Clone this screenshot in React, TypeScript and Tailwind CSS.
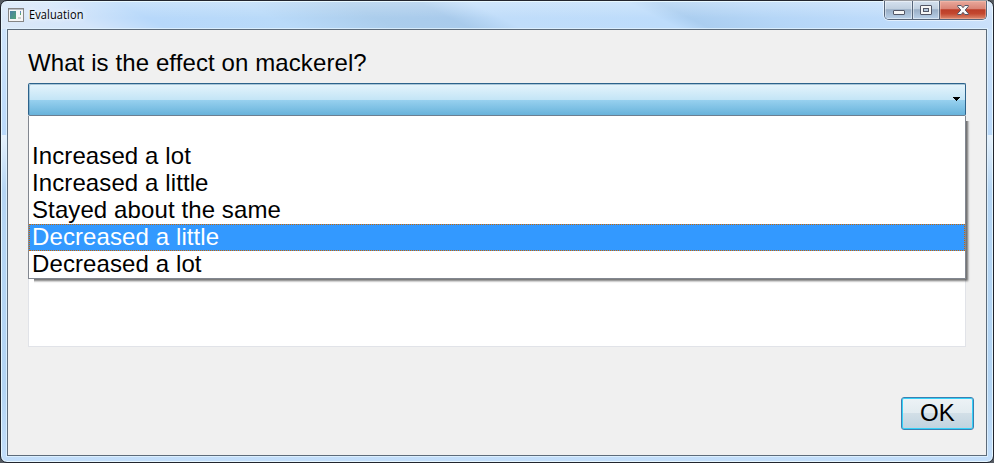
const options = [
  '',
  'Increased a lot',
  'Increased a little',
  'Stayed about the same',
  'Decreased a little',
  'Decreased a lot',
];

function AppIcon() {
  return (
    <svg width="16" height="14" viewBox="0 0 16 14" shapeRendering="crispEdges">
      <defs>
        <linearGradient id="picture" x1="0" y1="0" x2="1" y2="1">
          <stop offset="0" stopColor="#4b7fa6" />
          <stop offset="1" stopColor="#52a375" />
        </linearGradient>
      </defs>
      <rect width="16" height="14" fill="#858585" />
      <rect x="1" y="1" width="14" height="12" fill="#f6f6f6" />
      <rect x="1" y="1" width="14" height="1" fill="#b9bec4" />
      <rect x="2" y="3" width="6" height="8" fill="url(#picture)" />
      <rect x="12" y="3" width="1" height="4" fill="#6289bd" />
      <rect x="12" y="5" width="1" height="2" fill="#5aa573" />
      <rect x="10" y="9" width="3" height="2" fill="#cfcfcf" />
    </svg>
  );
}

function WindowButtons() {
  return (
    <div className="flex h-[19px] w-[103px] overflow-hidden rounded-b-[5px] border border-t-0 border-[#56657a] shadow-[0_0_0_1px_rgba(255,255,255,0.55)]">
      <button className="flex w-[28px] items-end justify-center border-r border-[#56657a] bg-[linear-gradient(#d5e1ef_0,#c0cfdf_45%,#99adc5_48%,#b9d0e9_100%)] pb-[3px] shadow-[inset_0_0_0_1px_rgba(255,255,255,0.45)]">
        <svg width="12" height="6" viewBox="0 0 12 6">
          <rect x="0.5" y="0.5" width="11" height="4" rx="0.5" fill="#f6f6f6" stroke="#535666" />
        </svg>
      </button>
      <button className="flex w-[27px] items-center justify-center border-r border-[#56657a] bg-[linear-gradient(#d5e1ef_0,#c0cfdf_45%,#99adc5_48%,#b9d0e9_100%)] shadow-[inset_0_0_0_1px_rgba(255,255,255,0.45)]">
        <svg width="12" height="10" viewBox="0 0 12 10">
          <rect x="0.5" y="0.5" width="11" height="9" rx="0.5" fill="#f6f6f6" stroke="#535666" />
          <rect x="3.5" y="3.5" width="5" height="3" fill="#b4c7dc" stroke="#535666" />
        </svg>
      </button>
      <button className="flex flex-1 items-center justify-center bg-[linear-gradient(#e9a99c_0,#d98274_45%,#bb3d28_48%,#c3472f_70%,#dc8b70_100%)] shadow-[inset_0_0_0_1px_rgba(255,200,185,0.4)]">
        <svg width="12" height="10" viewBox="0 0 12 10">
          <path d="M.7.5h3.5L6 2.7 7.8.5h3.5v1L8.2 5l3.1 3.5v1H7.8L6 7.3 4.2 9.5H.7v-1L3.8 5 .7 1.5z" fill="#f8f8f8" stroke="#535666" />
        </svg>
      </button>
    </div>
  );
}

function ComboBox() {
  return (
    <div className="relative h-[33px]">
      <div className="flex h-full items-center justify-end rounded-[2px] border border-[#2c628b] border-b-[#6c7f91] bg-[linear-gradient(#e5f4fc_0,#c4e5f6_50%,#98d1ef_51%,#68b3db_100%)] pr-[5px] pb-[2px] shadow-[inset_1px_1px_0_rgba(95,145,175,0.45)]">
        <svg width="7" height="4" viewBox="0 0 7 4" shapeRendering="crispEdges">
          <path d="M0 0h7v1H6v1H5v1H4v1H3V3H2V2H1V1H0z" fill="#000" />
        </svg>
      </div>
      <ul className="absolute top-[33px] left-0 z-10 w-full border border-t-0 border-[#828790] bg-white shadow-[1px_1px_2px_1px_rgba(0,0,0,0.55)] [clip-path:polygon(0_0,100%_0,100%_5px,calc(100%+6px)_5px,calc(100%+6px)_calc(100%+6px),6px_calc(100%+6px),6px_100%,0_100%)]">
        {options.map((label) => (
          <li
            key={label}
            className={
              label === 'Decreased a little'
                ? 'h-[27px] bg-[#3399ff] pl-[3px] leading-[25px] text-white outline-1 -outline-offset-1 outline-dotted outline-[#cc6600]'
                : 'h-[27px] pl-[3px] leading-[25px]'
            }
          >
            {label}
          </li>
        ))}
      </ul>
    </div>
  );
}

export default function App() {
  return (
    <div className="h-[463px] w-[994px] bg-[#555b62] font-['Liberation_Sans',Arial,sans-serif] text-[24px] leading-[27px] tracking-[0.1px] text-black">
      <div className="flex h-full flex-col rounded-[7px] border border-[#22252e] bg-[linear-gradient(#d3e6fb_0,#bad9fa_134px,#e6f1fc_134px,#b5d5f4_190px,#b3d4f3_390px,#c3defa_100%)] px-[6px] pb-[6px] shadow-[inset_0_0_0_1px_rgba(235,250,255,0.85)]">
        <header className="-mx-[5px] mt-px flex h-[27px] justify-between rounded-t-[5px] bg-[linear-gradient(rgba(255,255,255,0.25),rgba(255,255,255,0)_60%),linear-gradient(27deg,#dce9f8_0,#d3e5fa_9%,#b7d8fa_16%,#b9daf9_28%,#abcdec_38%,#a9cbec_45%,#c0ddfa_50%,#bddcfb_65%,#abcef0_68%,#b5d6f7_76%,#bfdcfb_88%,#d1e3fa_100%)] pr-[5px] pl-[6px]">
          <div className="flex h-[25px] items-center">
            <AppIcon />
            <h1 className="ml-[5px] origin-left scale-x-[0.92] font-['Open_Sans','Noto_Sans',sans-serif] text-[12px] leading-4 [text-shadow:0_0_6px_white,0_0_8px_white]">
              Evaluation
            </h1>
          </div>
          <div className="-mt-px">
            <WindowButtons />
          </div>
        </header>
        <main className="flex flex-1 flex-col border border-[#5d6b7a] bg-[#f0f0f0] px-[20px] pt-[19px] shadow-[0_0_0_1px_rgba(225,243,255,0.8)]">
          <label className="mb-[7px] h-[27px]">What is the effect on mackerel?</label>
          <ComboBox />
          <div className="h-[231px] border border-t-0 border-[#e1e3e8] bg-white" />
          <button className="-mr-[8px] mt-[50px] h-[33px] w-[73px] self-end rounded-[3px] border border-[#3c7fb1] bg-[linear-gradient(#edf3f6_0,#e2ebf0_48%,#d2dfe7_50%,#c0d3df_100%)] pb-[2px] leading-[28px] shadow-[inset_0_0_0_1px_#35d1f8]">
            OK
          </button>
        </main>
      </div>
    </div>
  );
}
